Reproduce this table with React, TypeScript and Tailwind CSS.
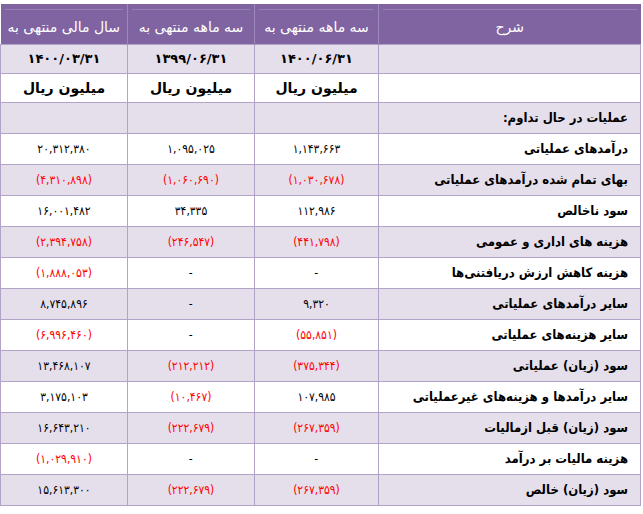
import React from "react";

type Row = { label: string; vals: [string, string, string]; shade: boolean };

const rows: Row[] = [
  { label: "عملیات در حال تداوم:", vals: ["", "", ""], shade: true },
  { label: "درآمدهای  عملیاتی", vals: ["۱,۱۴۳,۶۶۳", "۱,۰۹۵,۰۲۵", "۲۰,۳۱۲,۳۸۰"], shade: false },
  { label: "بهای تمام شده درآمدهای عملیاتی", vals: ["(۱,۰۳۰,۶۷۸)", "(۱,۰۶۰,۶۹۰)", "(۴,۳۱۰,۸۹۸)"], shade: true },
  { label: "سود ناخالص", vals: ["۱۱۲,۹۸۶", "۳۴,۳۳۵", "۱۶,۰۰۱,۴۸۲"], shade: false },
  { label: "هزینه های اداری و عمومی", vals: ["(۴۴۱,۷۹۸)", "(۲۴۶,۵۴۷)", "(۲,۳۹۴,۷۵۸)"], shade: true },
  { label: "هزینه کاهش ارزش دریافتنی‌ها", vals: ["-", "-", "(۱,۸۸۸,۰۵۳)"], shade: false },
  { label: "سایر درآمدهای عملیاتی", vals: ["۹,۳۲۰", "-", "۸,۷۴۵,۸۹۶"], shade: true },
  { label: "سایر هزینه‌های عملیاتی", vals: ["(۵۵,۸۵۱)", "-", "(۶,۹۹۶,۴۶۰)"], shade: false },
  { label: "سود (زیان) عملیاتی", vals: ["(۳۷۵,۳۴۴)", "(۲۱۲,۲۱۲)", "۱۳,۴۶۸,۱۰۷"], shade: true },
  { label: "سایر درآمدها و هزینه‌های غیرعملیاتی", vals: ["۱۰۷,۹۸۵", "(۱۰,۴۶۷)", "۳,۱۷۵,۱۰۳"], shade: false },
  { label: "سود (زیان) قبل ازمالیات", vals: ["(۲۶۷,۳۵۹)", "(۲۲۲,۶۷۹)", "۱۶,۶۴۳,۲۱۰"], shade: true },
  { label: "هزینه مالیات بر درآمد", vals: ["-", "-", "(۱,۰۲۹,۹۱۰)"], shade: false },
  { label: "سود (زیان) خالص", vals: ["(۲۶۷,۳۵۹)", "(۲۲۲,۶۷۹)", "۱۵,۶۱۳,۳۰۰"], shade: true },
];

const font = { fontFamily: '"DejaVu Sans", sans-serif' };
const condensed = { fontFamily: '"DejaVu Sans Condensed", "DejaVu Sans", sans-serif' };

function HeadCell({ text, w }: { text: string; w: string }) {
  return (
    <th
      className={`${w} h-[40px] p-0 bg-[#8064a2] border-l border-[#9d88bb] last:border-l-0 align-top`}
    >
      <div className="mx-[4px] mt-[5px] border-t border-[#9580b3]" />
      <div className="h-[34px] flex items-center justify-center text-white text-[14px] font-normal">
        {text}
      </div>
    </th>
  );
}

export default function App() {
  return (
    <div className="w-[643px] h-[514px] bg-white pt-[4px]" style={font}>
      <table dir="rtl" className="border-collapse table-fixed w-[640px]">
        <thead>
          <tr>
            <HeadCell text="شرح" w="w-[262px]" />
            <HeadCell text="سه ماهه منتهی به" w="w-[124px]" />
            <HeadCell text="سه ماهه منتهی به" w="w-[127px]" />
            <HeadCell text="سال مالی منتهی به" w="w-[127px]" />
          </tr>
        </thead>
        <tbody>
          <tr className="bg-[#e5dfec] h-[29px]">
            <td className="border border-[#b3a2c8]" />
            {["۱۴۰۰/۰۶/۳۱", "۱۳۹۹/۰۶/۳۱", "۱۴۰۰/۰۳/۳۱"].map((d, i) => (
              <td key={i} className="border border-[#b3a2c8] text-center text-[13px] font-bold text-black p-0">
                <span dir="ltr">{d}</span>
              </td>
            ))}
          </tr>
          <tr className="bg-white h-[29px]">
            <td className="border border-[#b3a2c8]" />
            {[0, 1, 2].map((i) => (
              <td key={i} className="border border-[#b3a2c8] text-center text-[14px] font-bold text-black p-0">
                میلیون ریال
              </td>
            ))}
          </tr>
          {rows.map((r, ri) => (
            <tr key={ri} className={`${r.shade ? "bg-[#e5dfec]" : "bg-white"} h-[31px]`}>
              <td
                className="border border-[#b3a2c8] text-right pr-[12px] pl-1 text-[13px] font-bold text-black whitespace-nowrap"
                style={condensed}
              >
                {r.label}
              </td>
              {r.vals.map((v, vi) => (
                <td
                  key={vi}
                  className={`border border-[#b3a2c8] text-center text-[12px] p-0 ${
                    v.startsWith("(") ? "text-[#ff0000]" : "text-black"
                  }`}
                  style={condensed}
                >
                  <span dir="ltr" className="tracking-[0.5px]">{v}</span>
                </td>
              ))}
            </tr>
          ))}
        </tbody>
      </table>
    </div>
  );
}
